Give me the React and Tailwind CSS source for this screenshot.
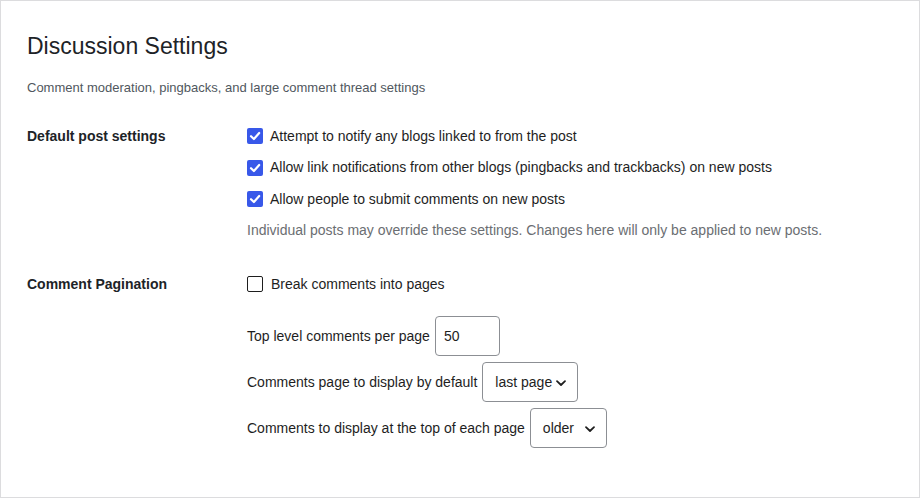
import React from "react";

const font = { fontFamily: '"Liberation Sans", Arial, sans-serif' };

// Casilla marcada/desmarcada al estilo del admin de WordPress
const Checkbox = ({ checked }) =>
  checked ? (
    <span className="w-4 h-4 rounded-[2px] bg-[#3858e9] flex items-center justify-center shrink-0">
      <svg width="16" height="16" viewBox="0 0 16 16" fill="none">
        <path d="M4 8.2 L6.9 11 L12.2 5" stroke="white" strokeWidth="2.2" strokeLinecap="round" strokeLinejoin="round" />
      </svg>
    </span>
  ) : (
    <span className="w-4 h-4 rounded-[2px] border-[1.5px] border-[#1e1e1e] bg-white shrink-0" />
  );

const CheckRow = ({ checked, label, h = "h-8" }) => (
  <label className={`flex items-center ${h} gap-[7px] text-[14px] text-[#1e1e1e]`}>
    <Checkbox checked={checked} />
    <span>{label}</span>
  </label>
);

const Chevron = () => (
  <svg width="12" height="12" viewBox="0 0 12 12" fill="none">
    <path d="M2 4.2 L6 8 L10 4.2" stroke="#1e1e1e" strokeWidth="1.8" strokeLinecap="round" strokeLinejoin="round" />
  </svg>
);

const FakeSelect = ({ value, width }) => (
  <div
    className={`relative h-[40px] ${width} border border-[#8c8f94] rounded-[4px] bg-white flex items-center pl-3 text-[14px] text-[#1e1e1e]`}
  >
    {value}
    <span className="absolute right-[10px] top-[14px]">
      <Chevron />
    </span>
  </div>
);

export default function App() {
  return (
    <div style={font} className="w-[920px] h-[498px] bg-white border border-[#dcdcde] pl-[26px] pt-[30px]">
      <h1 className="text-[23px] leading-[30px] font-normal text-[#1d2327]">Discussion Settings</h1>
      <p className="mt-[17px] text-[13px] leading-5 text-[#50575e]">
        Comment moderation, pingbacks, and large comment thread settings
      </p>

      {/* Ajustes por defecto */}
      <div className="flex mt-[22px]">
        <div className="w-[220px] shrink-0 text-[14px] leading-8 font-bold text-[#1d2327]">Default post settings</div>
        <div className="flex flex-col">
          <CheckRow checked label="Attempt to notify any blogs linked to from the post" />
          <CheckRow checked label="Allow link notifications from other blogs (pingbacks and trackbacks) on new posts" h="h-[31px]" />
          <CheckRow checked label="Allow people to submit comments on new posts" />
          <p className="mt-[5px] text-[14px] leading-5 text-[#6b6e72]">
            Individual posts may override these settings. Changes here will only be applied to new posts.
          </p>
        </div>
      </div>

      {/* Paginación */}
      <div className="flex mt-7">
        <div className="w-[220px] shrink-0 text-[14px] leading-8 font-bold text-[#1d2327]">Comment Pagination</div>
        <div className="flex flex-col">
          <label className="flex items-center h-8 gap-2 text-[14px] text-[#1e1e1e]">
            <Checkbox checked={false} />
            <span>Break comments into pages</span>
          </label>

          <div className="flex flex-col gap-[6px] mt-4 text-[14px] text-[#1e1e1e]">
            <div className="flex items-center gap-[5px]">
              <span>Top level comments per page</span>
              <div className="h-[40px] w-[65px] border border-[#8c8f94] rounded-[4px] flex items-center pl-2">50</div>
            </div>
            <div className="flex items-center gap-[5px]">
              <span>Comments page to display by default</span>
              <FakeSelect value="last page" width="w-[96px]" />
            </div>
            <div className="flex items-center gap-[5px]">
              <span>Comments to display at the top of each page</span>
              <FakeSelect value="older" width="w-[77px]" />
            </div>
          </div>
        </div>
      </div>
    </div>
  );
}
